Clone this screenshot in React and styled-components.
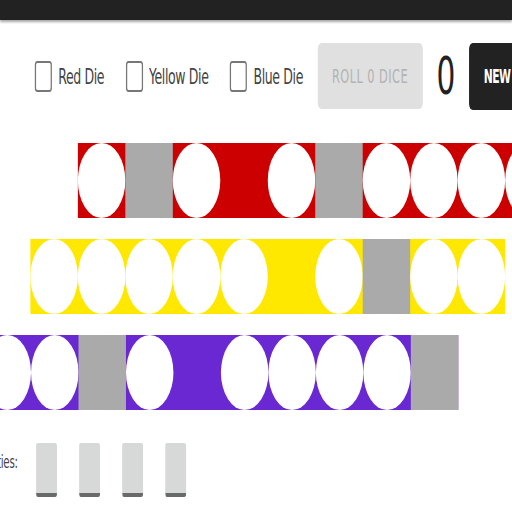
import React from 'react'
import styled, { createGlobalStyle } from 'styled-components'

// the reference is squeezed sideways, so the board is laid out at full width and squeezed once
const SQUEEZE = 0.633

const GlobalStyle = createGlobalStyle`
  html, body {
    margin: 0;
    padding: 0;
    background: #fff;
    overflow: hidden;
  }
  body {
    font-family: "DejaVu Sans Condensed", "Liberation Sans", sans-serif;
  }
`

const Stage = styled.div`
  width: ${512 / SQUEEZE}px;
  transform: scaleX(${SQUEEZE});
  transform-origin: 0 0;
`

const TopBar = styled.div`
  height: 20px;
  background: #222;
  box-shadow: 0 2px 3px rgba(0, 0, 0, 0.35);
`

const Controls = styled.div`
  display: flex;
  align-items: center;
  height: 66px;
  margin: 23px 0 0 55px;
  white-space: nowrap;

  & > * {
    flex-shrink: 0;
  }
`

const Option = styled.label`
  display: flex;
  align-items: center;
  gap: 10px;
  margin-right: 34px;
  font-size: 22px;
  letter-spacing: -0.6px;
  color: #444;

  &:last-of-type {
    margin-right: 23px;
  }
`

const Box = styled.span`
  width: 27px;
  height: 31px;
  box-sizing: border-box;
  border: 2px solid #777;
  border-radius: 4px;
`

const RollButton = styled.div`
  width: 166px;
  height: 66px;
  display: flex;
  align-items: center;
  justify-content: center;
  background: #e0e0e0;
  border-radius: 6px;
  color: #b3b3b3;
  font-size: 20px;
  letter-spacing: 0.7px;
`

const Score = styled.div`
  margin: 0 22px;
  font-size: 52px;
  font-weight: 300;
  color: #222;
  line-height: 1;
`

const NewButton = styled.div`
  height: 67px;
  padding: 0 30px 0 23px;
  display: flex;
  align-items: center;
  background: #222;
  border-radius: 6px;
  color: #fff;
  font-size: 19px;
  letter-spacing: -1px;
  font-weight: bold;
`

const Board = styled.div`
  display: flex;
  flex-direction: column;
  align-items: flex-start;
  gap: 21px;
  margin-top: 34px;
`

const Track = styled.div`
  display: flex;
  height: 75px;
  margin-left: ${p => p.$offset}px;
  background: ${p => p.$color};
`

const Cell = styled.div`
  flex: 0 0 75px;
  height: 75px;
  background: ${p => (p.$kind === 'x' ? '#aaa' : 'transparent')};

  &::after {
    content: '';
    display: ${p => (p.$kind === 'o' ? 'block' : 'none')};
    width: 100%;
    height: 100%;
    border-radius: 50%;
    background: #fff;
  }
`

const Penalties = styled.div`
  display: flex;
  align-items: flex-start;
  gap: 35px;
  margin: 33px 0 0 -57px;
`

const PenaltyLabel = styled.div`
  width: 85px;
  margin: 10px -6px 0 0;
  text-align: right;
  font-size: 18px;
  line-height: 18px;
  letter-spacing: -0.4px;
  color: #444;
`

const PenaltyBox = styled.div`
  width: 33px;
  height: 54px;
  box-sizing: border-box;
  background: #d7d8d8;
  border-radius: 3px;
  border-bottom: 4px solid #6a6a6a;
`

// o = open circle, x = crossed out, - = empty
const tracks = [
  { color: '#cc0000', offset: 123, cells: 'oxo-oxoooo' },
  { color: '#ffe800', offset: 48, cells: 'ooooo-oxoo' },
  { color: '#6a28d2', offset: -26, cells: 'ooxo-oooox' },
]

export default function App() {
  return (
    <Stage>
      <GlobalStyle />
      <TopBar />
      <Controls>
        <Option><Box />Red Die</Option>
        <Option><Box />Yellow Die</Option>
        <Option><Box />Blue Die</Option>
        <RollButton>ROLL 0 DICE</RollButton>
        <Score>0</Score>
        <NewButton>NEW GAME</NewButton>
      </Controls>
      <Board>
        {tracks.map((t, i) => (
          <Track key={i} $color={t.color} $offset={t.offset}>
            {t.cells.split('').map((c, j) => (
              <Cell key={j} $kind={c} />
            ))}
          </Track>
        ))}
      </Board>
      <Penalties>
        <PenaltyLabel>Penalties:</PenaltyLabel>
        {[0, 1, 2, 3].map(n => (
          <PenaltyBox key={n} />
        ))}
      </Penalties>
    </Stage>
  )
}
